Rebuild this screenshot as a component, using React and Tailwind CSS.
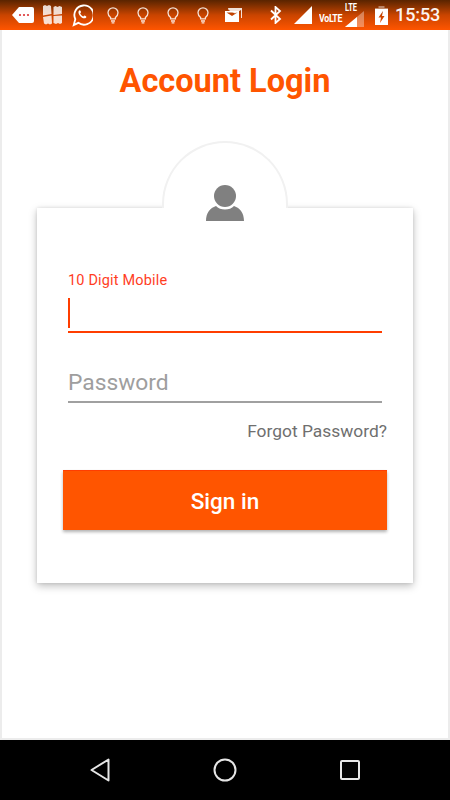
import React from "react";

function Bulb() {
  return (
    <svg width="14" height="18" viewBox="0 0 14 18" fill="none" stroke="#fff" strokeWidth="1.3" opacity="0.85">
      <path d="M4.600 11.500C3.200 10.400 2 9 2 6.800a5 5 0 0 1 10 0c0 2.200-1.200 3.600-2.600 4.700v1.300H4.600z" />
      <path d="M5 15h4M5.600 16.800h2.800" />
    </svg>
  );
}

function StatusBar() {
  return (
    <div className="h-[30px] shrink-0 flex items-center bg-gradient-to-b from-[#5a2400] via-[#c94400] to-[#ff5500] text-white">
      <svg className="ml-[12px]" width="22" height="16" viewBox="0 0 22 16">
        <path d="M7 0h13a2 2 0 0 1 2 2v12a2 2 0 0 1-2 2H7L0 8z" fill="#fff" />
        <circle cx="8" cy="8" r="1.100" fill="#d33" />
        <circle cx="12" cy="8" r="1.100" fill="#d33" />
        <circle cx="16" cy="8" r="1.100" fill="#d33" />
      </svg>
      <svg className="ml-[8px]" width="21" height="20" viewBox="0 0 21 20">
        <path d="M1 1l2-1 2 1 2-1 2 1 .5 8-8.500 1.500zM11.500 2l2-1 2 1 2-1 2.500 1v7l-8.500 1zM1 12l8.500-1.500.5 8-2 1-2-1-2 1-2-1zM11.500 11l8.500-.5v7.500l-2 1-2-1-2 1-2.500-1z" fill="#fff" opacity="0.82" />
      </svg>
      <svg className="ml-[8px]" width="22" height="23" viewBox="0 0 24 25" fill="none" stroke="#fff" strokeWidth="2">
        <path d="M3 23l1.700-6.500A10.500 10.500 0 1 1 8 20.500z" />
        <path d="M8.500 7.500c.5-1 1.500-1 2 0l.5 1.500-1 1c.5 1.500 2 3 3.500 3.500l1-1 1.500.5c1 .5 1 1.500 0 2.200-3 2-9.500-4.200-7.500-7.700z" fill="#fff" stroke="none" />
      </svg>
      <div className="ml-[13px] flex gap-[16px]">
        <Bulb />
        <Bulb />
        <Bulb />
        <Bulb />
      </div>
      <svg className="ml-[15px]" width="17" height="14" viewBox="0 0 17 14">
        <path d="M3 0h14v10h-1V2L10 5.500 3.500 2z" fill="#fff" opacity="0.85" />
        <path d="M0 3h14v11H0zM1.500 4.500L7 8l5.500-3.500z" fill="#fff" fillRule="evenodd" />
      </svg>
      <svg className="ml-[28px]" width="12" height="18" viewBox="0 0 12 18" fill="none" stroke="#fff" strokeWidth="1.800">
        <path d="M1 4.500l9 8.500-4.500 4V1L10 5 1 13.500" />
      </svg>
      <svg className="ml-[12px]" width="18" height="18" viewBox="0 0 18 18">
        <path d="M18 0v18H0z" fill="#fff" />
      </svg>
      <span className="ml-[7px] mt-[7px] w-[25px] text-[11px] leading-none font-bold tracking-[-0.4px] scale-x-[0.8] origin-left whitespace-nowrap">VoLTE</span>
      <div className="relative w-[20px] h-[24px] ml-[1px]">
        <span className="absolute left-0 top-0 text-[10px] leading-none font-bold scale-x-[0.75] origin-left">LTE</span>
        <svg className="absolute left-0 top-[8px]" width="19" height="16" viewBox="0 0 19 16">
          <path d="M19 0v16H0z" fill="#fff" opacity="0.35" />
          <path d="M12 6v10H0z" fill="#fff" />
        </svg>
      </div>
      <svg className="ml-[10px]" width="13" height="19" viewBox="0 0 13 19">
        <path d="M3.500 0h6v2H13v3H0V2h3.500z" fill="#fff" opacity="0.4" />
        <path d="M0 3h13v16H0zM8 5L3.500 11.500H6L5 17 9.500 10H7z" fill="#fff" fillRule="evenodd" />
      </svg>
      <span className="ml-[7px] text-[18px] leading-none font-medium opacity-95 tracking-[-0.1px]">15:53</span>
    </div>
  );
}

function NavBar() {
  return (
    <div className="h-[60px] shrink-0 bg-black flex items-center justify-center">
      <div className="w-[270px] flex items-center justify-between">
        <svg width="20" height="24" viewBox="0 0 20 24" fill="none" stroke="#e6e6e6" strokeWidth="2" strokeLinejoin="round">
          <path d="M18.500 1.500v21L1.500 12z" />
        </svg>
        <svg width="24" height="24" viewBox="0 0 24 24" fill="none" stroke="#e6e6e6" strokeWidth="2">
          <circle cx="12" cy="12" r="10.500" />
        </svg>
        <svg width="20" height="20" viewBox="0 0 20 20" fill="none" stroke="#e6e6e6" strokeWidth="2" strokeLinejoin="round">
          <rect x="1" y="1" width="18" height="18" rx="1" />
        </svg>
      </div>
    </div>
  );
}

export default function App() {
  return (
    <div className="w-[450px] h-[800px] flex flex-col bg-white overflow-hidden font-['Roboto',sans-serif]">
      <StatusBar />
      <div className="flex-1 border-x-2 border-b-2 border-[#ececec] flex flex-col items-center">
        <h1 className="mt-[32px] h-[38px] text-[32.500px] leading-[38px] font-bold text-[#ff5500]">Account Login</h1>
        <div className="relative mt-[108px] w-[376px] h-[375px] bg-white shadow-[0_3px_8px_rgba(0,0,0,0.25),0_0_3px_rgba(0,0,0,0.1)] pl-[31px] pr-[26px] pt-[64px]">
          <div className="absolute left-[125px] -top-[67px] w-[126px] h-[67px] bg-white rounded-t-[63px] border-[2px] border-b-0 border-[#f1f1f1]">
            <svg className="absolute left-[42px] top-[42px]" width="38" height="36" viewBox="0 0 38 36">
              <circle cx="19" cy="11" r="11" fill="#808080" />
              <path d="M0 36c0-8 4-13 10-15 2 2.500 5.500 3.500 9 3.500s7-1 9-3.500c6 2 10 7 10 15z" fill="#808080" />
            </svg>
          </div>
          <div className="text-[14.500px] leading-[18px] text-[#ff3d1f] tracking-[0.17px]">10 Digit Mobile</div>
          <div className="mt-[8px] mr-[5px] h-[35px] border-b-2 border-[#ff3d00] relative">
            <div className="absolute left-0 top-0 w-[2px] h-[30px] bg-[#ff3d00]" />
          </div>
          <div className="mt-[32px] mr-[5px] h-[38px] border-b-2 border-[#a0a0a0] text-[22.800px] leading-[36px] text-[#9e9e9e]">Password</div>
          <div className="mt-[17px] text-right text-[17.400px] leading-[22px] text-[#6f6f6f]">Forgot Password?</div>
          <button className="-ml-[5px] mt-[28px] w-[324px] h-[60px] pt-[2px] bg-[#ff5500] border-t border-[#ff3d00] shadow-[0_2px_3px_rgba(0,0,0,0.3)] text-white text-[22.500px] font-medium">Sign in</button>
        </div>
      </div>
      <NavBar />
    </div>
  );
}
